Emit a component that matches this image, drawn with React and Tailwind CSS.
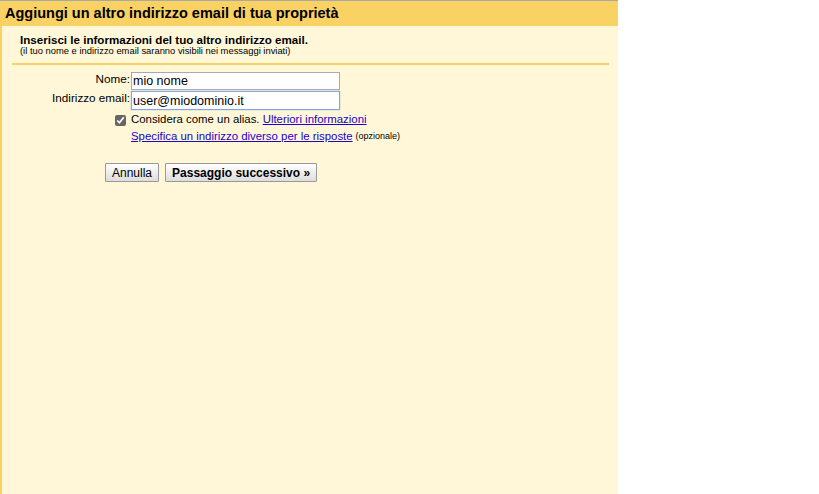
import React from "react";

export default function App() {
  return (
    <div className="w-[819px] h-[494px] bg-white font-['Liberation_Sans',Arial,sans-serif] text-black overflow-hidden">
      <div className="w-[618px] h-[494px] flex flex-col bg-[#fff7d7] border-t border-[#a8a8a8]">
        {/* header */}
        <div className="h-[25px] bg-[#fad163] px-[5px] flex items-center">
          <span className="text-[14.5px] font-bold leading-none">Aggiungi un altro indirizzo email di tua proprietà</span>
        </div>
        <div className="flex-1 border-l-2 border-[#fad163] pt-[7px]">
          <div className="pl-[18px]">
            <div className="text-[11.6px] font-bold leading-[13px]">Inserisci le informazioni del tuo altro indirizzo email.</div>
            <div className="text-[9.4px] leading-[10px]">(il tuo nome e indirizzo email saranno visibili nei messaggi inviati)</div>
          </div>
          <div className="ml-[10px] w-[597px] h-[2px] bg-[#fad163] mt-[7px]" />

          <div className="mt-[7px] text-[11.4px]">
            <div className="flex items-start h-[19px]">
              <label className="w-[128px] text-right leading-[14px] text-[11.7px]">Nome:</label>
              <input
                defaultValue="mio nome"
                className="ml-[1px] w-[209px] h-[18px] bg-white border border-[#aaa] px-[1px] text-[12.5px] leading-none outline-none"
              />
            </div>
            <div className="flex items-start h-[20px]">
              <label className="w-[128px] text-right leading-[14px] text-[11.7px]">Indirizzo email:</label>
              <input
                defaultValue="user@miodominio.it"
                className="ml-[1px] w-[209px] h-[19px] bg-white border border-[#7fa6e8] shadow-[0_0_1px_#7fa6e8] px-[1px] text-[12.5px] leading-none outline-none"
              />
            </div>
            <div className="flex items-center h-[16px] mt-[1px]">
              <div className="w-[126px] flex justify-end pr-[2px]">
                <input type="checkbox" defaultChecked className="w-[11px] h-[11px] m-0 accent-[#666]" />
              </div>
              <span className="ml-[3px]">
                Considera come un alias.{" "}
                <a href="#" className="text-[#2200cc] underline">Ulteriori informazioni</a>
              </span>
            </div>
            <div className="flex items-center h-[17px] pl-[129px]">
              <a href="#" className="text-[#2200cc] underline">Specifica un indirizzo diverso per le risposte</a>
              <span className="ml-[3px] text-[9px]">(opzionale)</span>
            </div>

            <div className="flex gap-[6px] pl-[103px] mt-[18px]">
              <button className="h-[19px] px-[6px] border border-[#999] bg-gradient-to-b from-white to-[#ddd] rounded-[1px] text-[12px] leading-none">
                Annulla
              </button>
              <button className="h-[19px] px-[6px] border border-[#999] bg-gradient-to-b from-white to-[#ddd] rounded-[1px] text-[12px] font-bold leading-none">
                Passaggio successivo »
              </button>
            </div>
          </div>
        </div>
      </div>
    </div>
  );
}
